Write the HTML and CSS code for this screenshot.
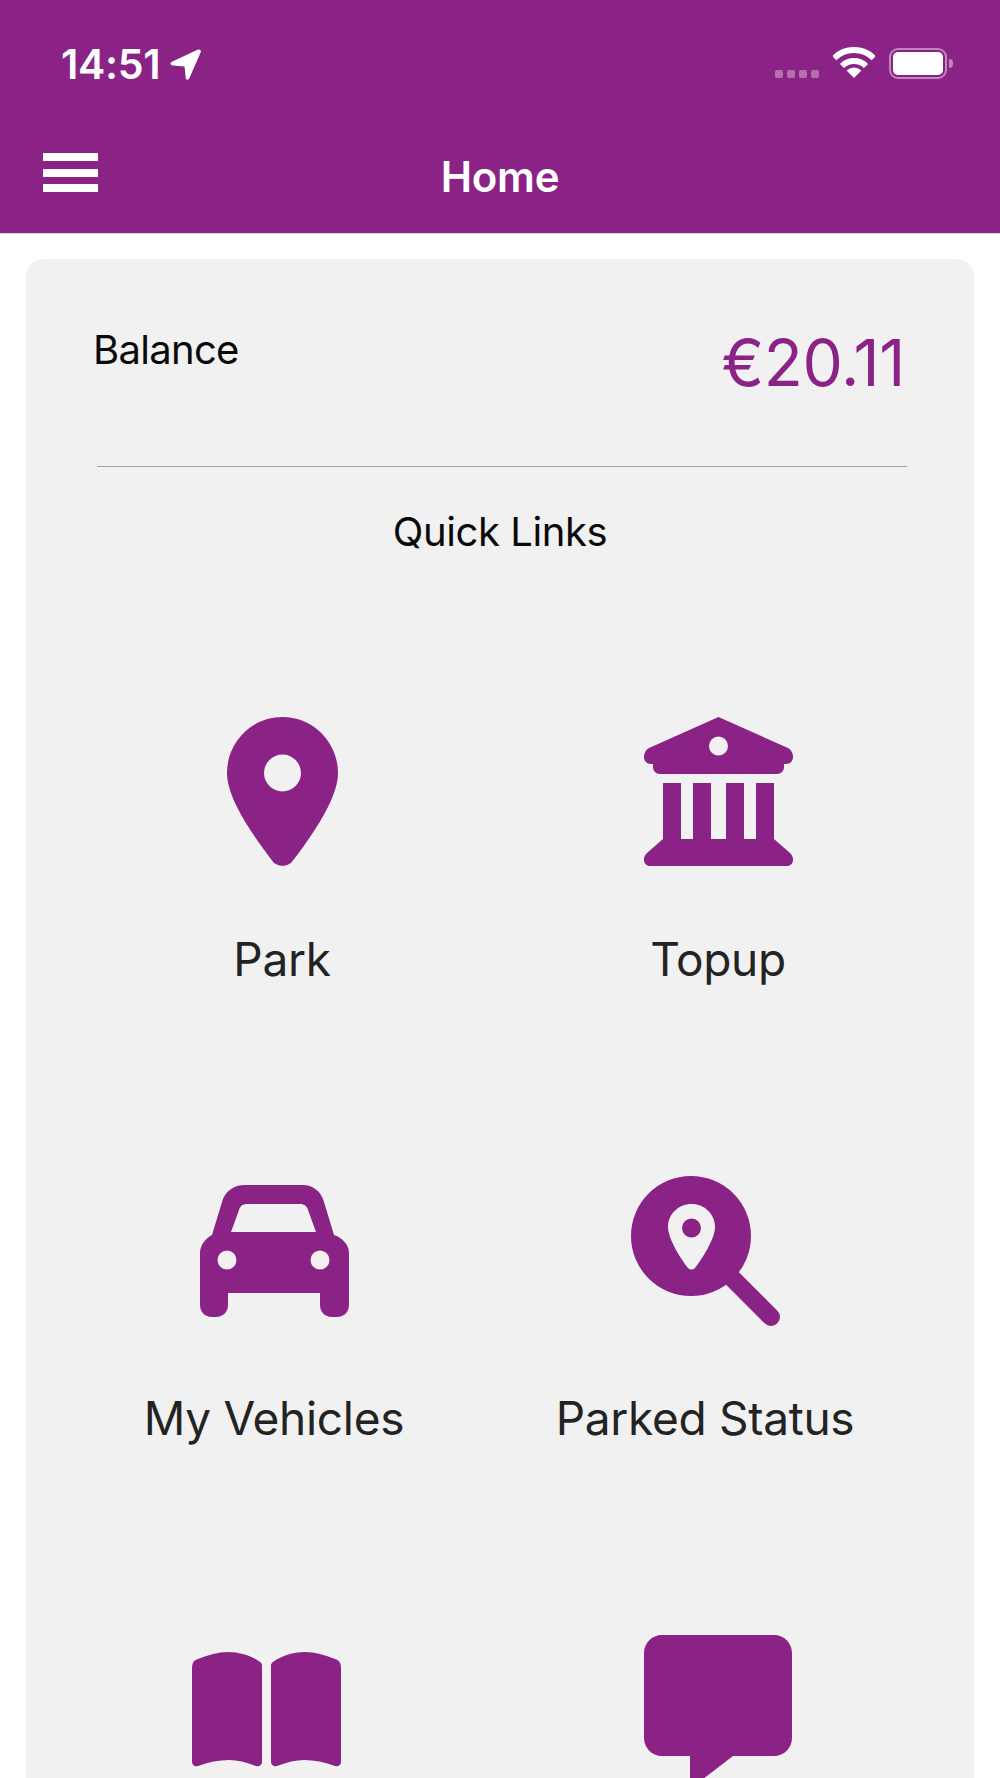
FILE: index.html
```html
<!DOCTYPE html>
<html lang="en">
<head>
<meta charset="utf-8">
<title>Home</title>
<link rel="stylesheet" href="styles.css">
</head>
<body>
<header class="top">
  <div class="status">
    <div class="status-left">
      <span class="time">14:51</span>
      <svg class="loc" viewBox="0 0 31 31"><path d="M27.5 0.8C29.8 -0.2 31.4 1.4 30.6 3.5L19.6 28.8C18.4 31.4 15.8 31.2 15.6 28.4L14.6 17.6L3 16.6C0 16.2 -0.4 13.6 2.4 12.4Z"/></svg>
    </div>
    <div class="status-right">
      <div class="dots"><i></i><i></i><i></i><i></i></div>
      <svg class="wifi" viewBox="0 0 42 31"><path class="arc" d="M1.2 11.2A28 28 0 0 1 40.8 11.2"/><path class="arc" d="M9 19A17 17 0 0 1 33 19"/><path class="wedge" d="M21 31L13.6 23.6Q21 17.6 28.4 23.6Z"/></svg>
      <div class="battery"><div class="charge"></div></div>
      <div class="nub"></div>
    </div>
  </div>
  <nav class="nav">
    <div class="burger"><i></i><i></i><i></i></div>
    <h1 class="title">Home</h1>
  </nav>
</header>
<main class="card">
  <section class="balance">
    <span class="balance-label">Balance</span>
    <span class="balance-value">€20.11</span>
  </section>
  <hr class="rule">
  <h2 class="links-title">Quick Links</h2>
  <div class="links">
    <a class="link">
      <svg class="ico" width="111" height="150" viewBox="0 0 111 150"><path fill-rule="evenodd" d="M55.5 0C24.8 0 0 25 0 56C0 66 4 78 10 90C20 110 36 132 47 146Q55.5 152 64 146C75 132 91 110 101 90C107 78 111 66 111 56C111 25 86 0 55.5 0ZM55.5 37.5A18.5 18.5 0 1 1 55.5 74.5A18.5 18.5 0 1 1 55.5 37.5Z"/></svg>
      <span class="label">Park</span>
    </a>
    <a class="link">
      <svg class="ico" width="149" height="150" viewBox="0 0 149 150"><path fill-rule="evenodd" d="M74.5 0L144 31C151 35 151 47 142 47H140V50C140 54 137 57 133 57H16C12 57 9 54 9 50V47H7C-2 47 -2 35 5 31ZM74.5 19.5A9.5 9.5 0 1 0 74.5 38.5A9.5 9.5 0 1 0 74.5 19.5Z"/><path d="M19 66H37V122H49V66H67V122H82V66H100V122H112V66H130V122L146 136C151 141 150 149 142 149H7C-1 149 -2 141 3 136L19 122Z"/></svg>
      <span class="label">Topup</span>
    </a>
    <a class="link shift-a">
      <svg class="ico" width="149" height="150" viewBox="0 -9 149 150"><path fill-rule="evenodd" d="M45 0H102C113 0 121 6 124 17L134 50C143 53 149 60 149 68V120C149 127 144 132 137 132H132C125 132 120 127 120 120V108H28V120C28 127 23 132 16 132H12C5 132 0 127 0 120V68C0 60 6 53 12 50L22 17C25 6 34 0 45 0ZM47 19C43 19 40 21 39 25L31 47H116L108 25C107 21 104 19 100 19ZM27 65.5A9.5 9.5 0 1 0 27 84.5A9.5 9.5 0 1 0 27 65.5ZM120 65.5A9.5 9.5 0 1 0 120 84.5A9.5 9.5 0 1 0 120 65.5Z"/></svg>
      <span class="label">My Vehicles</span>
    </a>
    <a class="link shift-b">
      <svg class="ico" width="149" height="150" viewBox="0 0 149 150"><path fill-rule="evenodd" d="M60 0A60 60 0 1 0 60 120A60 60 0 1 0 60 0ZM60.5 28C47.5 28 37 38 37 51C37 63 50 83 57 92Q60.5 95 64 92C71 83 84 63 84 51C84 38 73.5 28 60.5 28ZM60.5 42.5A9.5 9.5 0 1 1 60.5 61.5A9.5 9.5 0 1 1 60.5 42.5Z"/><path class="handle" d="M90 91L140 141"/></svg>
      <span class="label">Parked Status</span>
    </a>
    <a class="link shift-c">
      <svg class="ico" width="149" height="150" viewBox="0 -17 149 150"><path d="M0 16C0 11 2 8 6 7C16 3 26 0 36 0C48 0 60 4 68 10C69.5 11 70 12 70 14V110C70 113 67 115 64 114C54 110 45 108 37 108C27 108 16 110 6 114C3 115 0 113 0 110Z"/><path d="M149 16C149 11 147 8 143 7C133 3 123 0 113 0C101 0 89 4 81 10C79.5 11 79 12 79 14V110C79 113 82 115 85 114C95 110 104 108 112 108C122 108 133 110 143 114C146 115 149 113 149 110Z"/></svg>
    </a>
    <a class="link">
      <svg class="ico" width="148" height="150" viewBox="0 0 148 150"><path d="M18 0H130C140 0 148 8 148 18V103C148 113 140 121 130 121H89L46 154V121H18C8 121 0 113 0 103V18C0 8 8 0 18 0Z"/></svg>
    </a>
  </div>
</main>
</body>
</html>
```

FILE: styles.css
```css
* { box-sizing: border-box; margin: 0; padding: 0; }
html, body { height: 1778px; overflow: hidden; }
body { background: #fff; font-family: Inter, "Noto Sans", sans-serif; }

.top { height: 234px; background: #8b2285; border-bottom: 1px solid #d8d0d8; color: #fff; }

.status { height: 125px; display: flex; justify-content: space-between; align-items: flex-start; padding: 47px 47px 0 61px; }
.status-left { display: flex; align-items: center; gap: 10px; }
.time { font-size: 41px; font-weight: 600; line-height: 34px; letter-spacing: -0.3px; }
.loc { width: 31px; height: 31px; fill: #fff; margin-top: 1px; }
.status-right { display: flex; align-items: flex-start; }
.dots { display: flex; gap: 4px; margin: 23px 14px 0 0; }
.dots i { width: 8px; height: 8px; border-radius: 2px; background: rgba(255,255,255,.35); }
.wifi { width: 42px; height: 31px; margin-right: 14px; }
.arc { fill: none; stroke: #fff; stroke-width: 6; }
.wedge { fill: #fff; }
.battery { width: 58px; height: 31px; margin-top: 1px; padding: 2px; border: 2px solid rgba(255,255,255,.45); border-radius: 9px; }
.charge { width: 100%; height: 100%; background: #fff; border-radius: 5px; }
.nub { width: 4px; height: 9px; margin: 12px 0 0 2px; background: rgba(255,255,255,.45); border-radius: 0 4px 4px 0; }

.nav { display: flex; align-items: flex-start; position: relative; padding-left: 43px; }
.burger { width: 55px; display: flex; flex-direction: column; gap: 7.5px; padding-top: 28px; }
.burger i { height: 8px; background: #fff; display: block; }
.title { position: absolute; left: 0; right: 0; top: 27px; text-align: center; font-size: 42px; line-height: 50px; font-weight: 600; letter-spacing: -0.3px; }

.card { margin: 25px 26px 0; height: 1600px; background: #f1f1f1; border-radius: 18px; padding: 0 40px; }
.balance { height: 207px; display: flex; justify-content: space-between; align-items: flex-start; padding: 0 29px 0 27px; }
.balance-label { font-size: 40px; line-height: 46px; margin-top: 68px; color: #0a0a0a; letter-spacing: -0.7px; }
.balance-value { font-size: 64px; line-height: 72px; margin-top: 68px; font-weight: 400; color: #8b2285; letter-spacing: -0.3px; }
.rule { border: 0; height: 1px; background: #a2a2a2; margin: 0 27px 0 31px; }
.links-title { font-size: 40px; line-height: 46px; font-weight: 400; text-align: center; margin-top: 42px; color: #0a0a0a; letter-spacing: -0.4px; }

.links { display: grid; grid-template-columns: 1fr 1fr; grid-auto-rows: 459px; column-gap: 4px; margin-top: 162px; }
.link { display: flex; flex-direction: column; align-items: center; }
.ico { display: block; fill: #8b2285; }
.handle { fill: none; stroke: #8b2285; stroke-width: 18; stroke-linecap: round; }
.label { font-size: 46px; line-height: 56px; margin-top: 64px; color: #232323; letter-spacing: -0.3px; }
.shift-a { padding-right: 16px; }
.shift-b { padding-right: 26px; }
.shift-c { padding-right: 32px; }
```
